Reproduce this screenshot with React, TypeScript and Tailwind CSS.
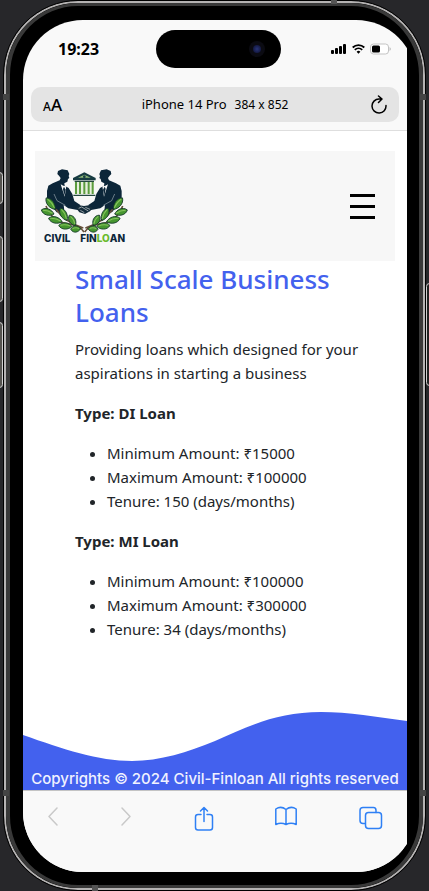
import type { ReactNode } from "react";

const loans = [
  { name: "DI Loan", min: "₹15000", max: "₹100000", tenure: "150" },
  { name: "MI Loan", min: "₹100000", max: "₹300000", tenure: "34" },
];

const leaves: [number, number, number, number][] = [
  [62, 173, 22, 52],
  [53, 198, 20, 18],
  [76, 222, 21, 14],
  [101, 205, 21, 62],
  [106, 240, 20, 4],
  [127, 223, 18, 60],
  [137, 249, 15, -4],
];

function LogoHalf() {
  return (
    <g>
      <path
        d="M82 84l2-9 12-5 17 3 5 11-2 6 2 6-4 3-2 8-9 5 1 7 12 7 11 18 6 21 18 12-8 15-28-5-14-10 3 26-24-4-16-20-13-12v-32l4-16 13-7 21-9 3-7-5-7z"
        fill="#0c2639"
      />
      <path d="M92 115l12 37 5-31-9-2z" fill="#f7f7f7" />
      <path d="M102 122l-3 7 4 20 4-18z" fill="#0c2639" />
      <path d="M72 144l9 20 25 14" stroke="#9aa7b0" strokeWidth="2" fill="none" />
      <path d="M48 180Q66 226 108 232T162 258M78 190Q104 228 160 246" stroke="#66503a" strokeWidth="5" fill="none" />
      {leaves.map(([x, y, r, a]) => (
        <g key={`${x}-${y}`} transform={`translate(${x} ${y}) rotate(${a})`}>
          <path
            d={`M${-r} 0C${-r / 2} -14 ${r / 2} -11 ${r} 0C${r / 2} 11 ${-r / 2} 14 ${-r} 0Z`}
            fill="#46962f"
            stroke="#173b2b"
            strokeWidth="2.5"
          />
          <path d={`M${-r + 5} -1Q0 -6 ${r - 5} -1`} stroke="#86c35c" strokeWidth="3" fill="none" />
        </g>
      ))}
    </g>
  );
}

function Logo() {
  return (
    <svg viewBox="0 0 300 240" className="h-20 w-[100px]" role="img" aria-label="Civil Finloan">
      <g transform="translate(-15 -60)">
        <path d="M129 96l34-17 34 17v7h-68z" fill="#173b42" />
        <path d="M144 95l19-9 19 9z" fill="#91bd78" />
        <circle cx="163" cy="92" r="4" fill="#173b42" />
        <path d="M134 106h58v38h-58z" fill="#e6efdc" />
        <path d="M138 106v38M150 106v38M163 106v38M176 106v38M188 106v38" stroke="#5b9c3e" strokeWidth="6" />
        <path d="M134 106h58M130 148h66" stroke="#24483f" strokeWidth="4" />
        <LogoHalf />
        <g transform="translate(326 0) scale(-1 1)">
          <LogoHalf />
        </g>
        <path d="M138 186l10-8 14 2 14-2 12 8-8 10-15 8-17-5z" fill="#142c3b" />
        <path d="M146 187l9-4 20 12M151 193l12 7M166 184l14 6" stroke="#d4d9da" strokeWidth="2" fill="none" />
        <g className="font-['Inter',sans-serif] text-[30px] font-extrabold" fill="#0c2639">
          <text x="42" y="287">CIVIL</text>
          <text x="151" y="287">
            FIN<tspan fill="#6abb2e">LO</tspan>AN
          </text>
        </g>
      </g>
    </svg>
  );
}

function StatusBar() {
  return (
    <div className="flex h-[67px] items-start pl-[35px] pr-4 pt-2.5">
      <time className="mt-[7px] w-[98px] text-base leading-6 font-bold text-black">19:23</time>
      <div className="flex h-[38px] w-[125px] items-center justify-end rounded-full bg-black pr-4">
        <span className="flex size-4 items-center justify-center rounded-full bg-[#0b0b12]">
          <span className="size-2 rounded-full bg-[radial-gradient(circle,#293579,#0b0d2a)]" />
        </span>
      </div>
      <div className="mt-[11px] flex h-4 flex-1 items-center justify-end gap-[5px]">
        <svg width="16" height="10" viewBox="0 0 16 10" aria-hidden="true">
          <rect x="0" y="6" width="3" height="4" rx="1" />
          <rect x="4" y="4" width="3" height="6" rx="1" />
          <rect x="8" y="2" width="3" height="8" rx="1" />
          <rect x="12" y="0" width="3" height="10" rx="1" />
        </svg>
        <svg width="13" height="10" viewBox="0 0 13 10" fill="none" stroke="black" strokeWidth="1.8" aria-hidden="true">
          <path d="M.7 3.5a8.4 8.4 0 0 1 11.6 0M2.8 5.9a5.3 5.3 0 0 1 7.4 0" />
          <path d="M4.6 7.7a2.8 2.8 0 0 1 3.8 0L6.5 9.8z" fill="black" stroke="none" />
        </svg>
        <svg width="21" height="12" viewBox="0 0 21 12" aria-hidden="true">
          <rect x=".5" y="1" width="18" height="10" rx="3" fill="white" stroke="#c3c3c3" />
          <rect x="2" y="2.5" width="8" height="7" rx="1.5" />
          <path d="M19.5 4v4q1.5-.8 1.5-2t-1.5-2" fill="#c3c3c3" />
        </svg>
      </div>
    </div>
  );
}

function AddressBar() {
  return (
    <div className="border-b border-[#dedede] px-2 pb-2">
      <div className="flex h-[35px] items-center justify-between rounded-[10px] bg-[#e4e4e4] px-3 text-black">
        <button type="button" aria-label="Text size" className="w-6 text-left leading-6">
          <span className="text-xs font-medium">A</span>
          <span className="text-[17px] font-medium">A</span>
        </button>
        <p className="flex items-baseline gap-2 text-[13px]">
          iPhone 14 Pro <span className="text-xs">384 x 852</span>
        </p>
        <button type="button" aria-label="Reload" className="flex w-6 justify-end">
          <svg width="16" height="19" viewBox="0 0 16 19" fill="none" stroke="black" strokeWidth="1.5" strokeLinecap="round" strokeLinejoin="round">
            <path d="M15 10.5A7 7 0 1 1 8 4h2.5M7.5 1l3.5 3-3.5 3.5" />
          </svg>
        </button>
      </div>
    </div>
  );
}

const toolIcon = {
  height: 28,
  fill: "none",
  stroke: "currentColor",
  strokeWidth: 1.5,
  strokeLinecap: "round",
  strokeLinejoin: "round",
} as const;

function ToolButton({ label, color, children }: { label: string; color: string; children: ReactNode }) {
  return (
    <button type="button" aria-label={label} className={color}>
      {children}
    </button>
  );
}

function BrowserToolbar() {
  return (
    <nav aria-label="Browser" className="flex h-[82px] items-start justify-between border-t border-[#c4c4c4] bg-[#f9f9f9] pr-[23px] pl-[25px] pt-3">
      <ToolButton label="Back" color="text-[#c9c9c9]">
        <svg {...toolIcon} width="10" viewBox="0 0 10 28"><path d="M9 5L1 13.5 9 22" /></svg>
      </ToolButton>
      <ToolButton label="Forward" color="text-[#c9c9c9]">
        <svg {...toolIcon} width="12" viewBox="0 0 12 28"><path d="M2 5l8 8.5L2 22" /></svg>
      </ToolButton>
      <ToolButton label="Share" color="text-[#2f80f5]">
        <svg {...toolIcon} width="20" viewBox="0 0 20 28">
          <path d="M7 11.5H4Q1.500 11.5 1.500 14v10.500Q1.500 27 4 27h12q2.500 0 2.500-2.500V14Q18.500 11.5 16 11.5h-3M10 18.500V4.500M6.500 8L10 4.500 13.500 8" />
        </svg>
      </ToolButton>
      <ToolButton label="Bookmarks" color="text-[#2f80f5]">
        <svg {...toolIcon} width="20" viewBox="1 0 20 28" overflow="visible">
          <path d="M11 6.500v15M11 6.500Q6 2.500 .8 6v15.500q5.200-2.500 10.200 0 5-2.500 10.200 0V6Q16 2.500 11 6.500" />
        </svg>
      </ToolButton>
      <ToolButton label="Tabs" color="text-[#2f80f5]">
        <svg {...toolIcon} width="26" viewBox="0 0 26 28">
          <path d="M7 20.500H5Q2 20.500 2 17.500V7.500Q2 4.500 5 4.500h10.500Q18 4.500 18 7.500V9.500" />
          <rect x="7.5" y="9.5" width="16" height="16" rx="3" />
        </svg>
      </ToolButton>
    </nav>
  );
}

function SiteFooter() {
  return (
    <footer className="mt-auto">
      <svg viewBox="0 0 384 56" preserveAspectRatio="none" className="block h-14 w-full" aria-hidden="true">
        <path d="M0 25C40 39 75 51 109 51C137 51 165 42 192 31C228 15 255 2 298 2C325 2 355 7 384 11V56H0Z" fill="#4361ee" />
      </svg>
      <p className="bg-[#4361ee] pt-0.5 text-center font-['Inter',sans-serif] text-[15px] leading-[22px] font-medium whitespace-nowrap text-[#f0f2ff]">
        Copyrights © 2024 Civil-Finloan All rights reserved
      </p>
    </footer>
  );
}

function WebPage() {
  return (
    <div className="flex flex-1 flex-col bg-white text-[#212529]">
      <header className="mx-3 mt-5 flex h-[110px] items-center justify-between bg-[#f7f7f7] pr-5">
        <Logo />
        <button type="button" aria-label="Menu" className="flex w-[25px] flex-col gap-2">
          <span className="h-[3px] w-full bg-black" />
          <span className="h-[3px] w-full bg-black" />
          <span className="h-[3px] w-full bg-black" />
        </button>
      </header>
      <main className="pt-0.5 pr-10 pb-6 pl-[52px] text-[15px] leading-6">
        <h1 className="mb-2 text-[26px] leading-[33px] font-medium text-[#4361ee]">Small Scale Business Loans</h1>
        <p className="mb-4">Providing loans which designed for your aspirations in starting a business</p>
        {loans.map((loan) => (
          <section key={loan.name}>
            <h2 className="mb-4 font-bold">Type: {loan.name}</h2>
            <ul className="mb-4 list-disc pl-8">
              <li>Minimum Amount: {loan.min}</li>
              <li>Maximum Amount: {loan.max}</li>
              <li>Tenure: {loan.tenure} (days/months)</li>
            </ul>
          </section>
        ))}
      </main>
      <SiteFooter />
    </div>
  );
}

export default function App() {
  return (
    <div className="relative flex min-h-screen flex-col bg-[#27272a] px-1 py-px font-['Noto_Sans','Open_Sans',sans-serif]">
      <span className="absolute top-[172px] -left-1 h-8 w-[7px] rounded-sm border border-[#d0d0d0] bg-[#55534f]" />
      <span className="absolute top-[236px] -left-1 h-[66px] w-[7px] rounded-sm border border-[#d0d0d0] bg-[#55534f]" />
      <span className="absolute top-[322px] -left-1 h-[66px] w-[7px] rounded-sm border border-[#d0d0d0] bg-[#55534f]" />
      <span className="absolute top-[283px] -right-1 h-[103px] w-[7px] rounded-sm border border-[#d0d0d0] bg-[#222222]" />
      <div className="flex flex-1 flex-col rounded-[74px] border-2 border-[#b5b3b3] bg-black outline outline-black">
        <div className="flex flex-1 flex-col rounded-[72px] border-x-4 border-y-3 border-[#393939] pt-3.5 pr-3 pb-[13px] pl-[13px]">
          <div className="flex flex-1 flex-col bg-[#f9f9f9] [clip-path:inset(0_-9px_0_0_round_60px)]">
            <StatusBar />
            <AddressBar />
            <WebPage />
            <BrowserToolbar />
          </div>
        </div>
      </div>
      <span className="absolute top-[94px] left-[3px] h-1.5 w-1.5 bg-[#444444]" />
      <span className="absolute top-[94px] right-[3px] h-1.5 w-1.5 bg-[#444444]" />
      <span className="absolute bottom-[95px] left-[3px] h-1.5 w-1.5 bg-[#444444]" />
      <span className="absolute right-[3px] bottom-[95px] h-1.5 w-1.5 bg-[#444444]" />
      <span className="absolute top-0 right-[92px] h-1 w-1.5 bg-[#555555]" />
      <span className="absolute bottom-0 left-[92px] h-1.5 w-1.5 bg-[#555555]" />
    </div>
  );
}
